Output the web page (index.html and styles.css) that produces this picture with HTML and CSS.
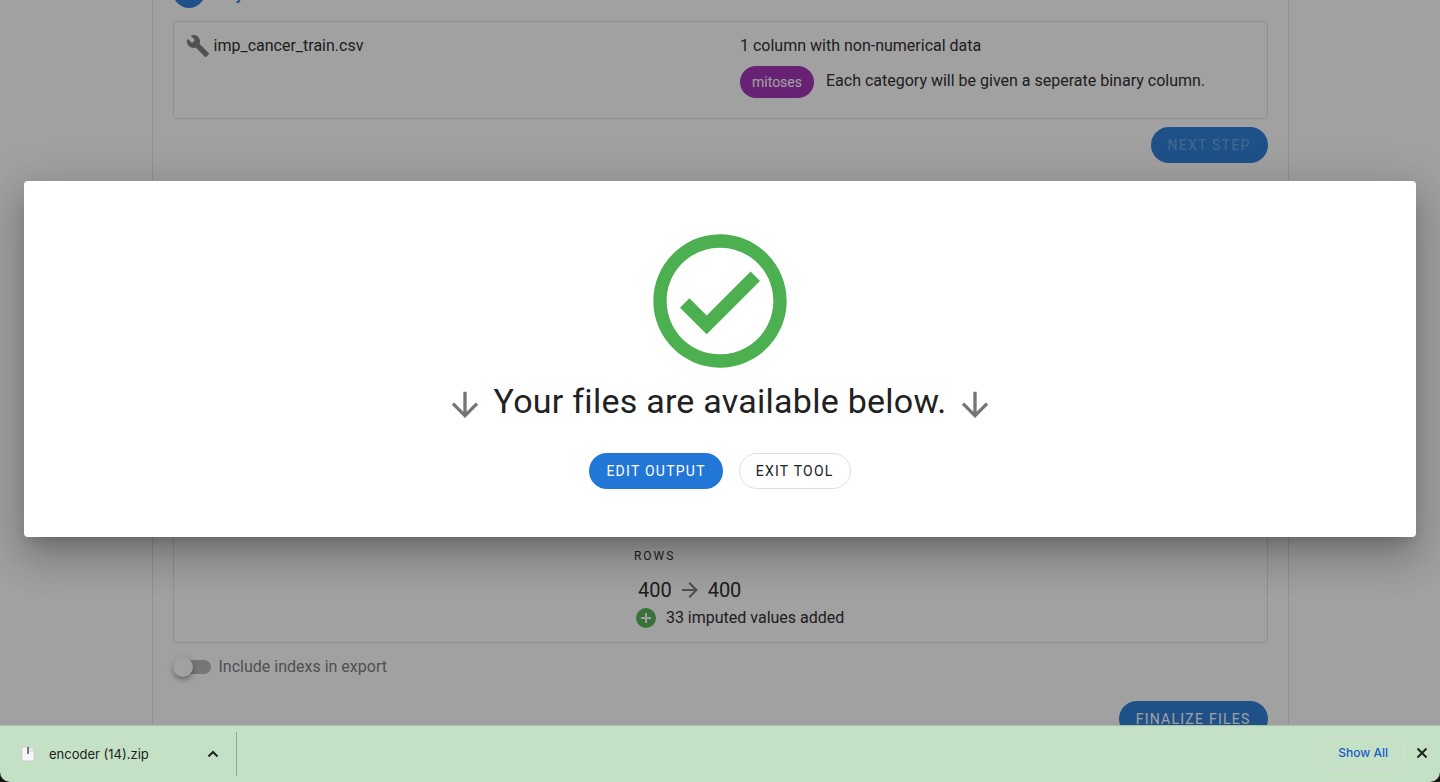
FILE: index.html
```html
<!DOCTYPE html>
<html lang="en">
<head>
<meta charset="utf-8">
<title>Encoder</title>
<link rel="stylesheet" href="styles.css">
</head>
<body>
<div class="viewport">
  <main class="stepper">
    <header class="step-head">
      <span class="step-num">2</span>
      <h2 class="step-title">Adjust for non-numerical columns</h2>
    </header>
    <section class="card columns-card">
      <div class="file">
        <svg class="icon" viewBox="0 0 24 24" width="24" height="24"><path d="M22.7 19l-9.1-9.1c.9-2.3.4-5-1.5-6.9-2-2-5-2.4-7.4-1.3L9 6 6 9 1.6 4.7C.4 7.1.9 10.1 2.9 12.1c1.9 1.9 4.6 2.4 6.9 1.5l9.1 9.1c.4.4 1 .4 1.4 0l2.3-2.3c.5-.4.5-1.1.1-1.4z"/></svg>
        <span>imp_cancer_train.csv</span>
      </div>
      <div class="summary">
        <p class="line">1 column with non-numerical data</p>
        <div class="category"><span class="chip">mitoses</span><p class="line">Each category will be given a seperate binary column.</p></div>
      </div>
    </section>
    <div class="actions"><button class="btn primary" disabled>Next step</button></div>
    <section class="card result-card">
      <div class="rows">
        <h3 class="overline">Rows</h3>
        <div class="counts"><span>400</span>
          <svg class="icon" viewBox="0 0 24 24" width="24" height="24"><path d="M4 11v2h12l-5.500 5.500 1.420 1.420L19.840 12l-7.920-7.920L10.500 5.500 16 11H4z"/></svg>
          <span>400</span></div>
        <div class="imputed">
          <svg class="plus" viewBox="0 0 24 24" width="24" height="24"><circle cx="12" cy="12" r="9" fill="#fff"/><path d="M17 13h-4v4h-2v-4H7v-2h4V7h2v4h4m-5-9A10 10 0 0 0 2 12a10 10 0 0 0 10 10 10 10 0 0 0 10-10A10 10 0 0 0 12 2z"/></svg>
          <span>33 imputed values added</span></div>
      </div>
    </section>
    <label class="switch"><input type="checkbox" role="switch"><span>Include indexs in export</span></label>
    <div class="actions"><button class="btn primary">Finalize files</button></div>
  </main>
  <div class="overlay">
    <div class="dialog" role="dialog" aria-modal="true" aria-labelledby="dialog-title">
      <svg class="check" viewBox="0 0 24 24" width="160" height="160"><path d="M12 2C6.500 2 2 6.500 2 12s4.500 10 10 10 10-4.500 10-10S17.500 2 12 2m0 18c-4.420 0-8-3.580-8-8s3.580-8 8-8 8 3.580 8 8-3.580 8-8 8m4.590-12.420L10 14.170l-2.590-2.580L6 13l4 4 8-8z"/></svg>
      <div class="dialog-head">
        <svg class="icon" viewBox="0 0 24 24" width="40" height="40"><path d="M11 4h2v12l5.500-5.500 1.420 1.420L12 19.840l-7.920-7.920L5.500 10.500 11 16V4z"/></svg>
        <h1 id="dialog-title">Your files are available below.</h1>
        <svg class="icon" viewBox="0 0 24 24" width="40" height="40"><path d="M11 4h2v12l5.500-5.500 1.420 1.420L12 19.840l-7.920-7.920L5.500 10.500 11 16V4z"/></svg>
      </div>
      <div class="dialog-actions">
        <button class="btn primary">Edit output</button>
        <button class="btn outlined">Exit tool</button>
      </div>
    </div>
  </div>
</div>
<footer class="shelf-frame">
  <div class="shelf">
    <div class="download">
      <svg class="zip" viewBox="0 0 14 16" width="14" height="16"><path d="M1 1h8l4 4v10H1z" fill="#f7f5f7" stroke="#b5b9b5" stroke-width=".5"/><path d="M9 1v4h4" fill="#fff" stroke="#aaa" stroke-width=".6"/><path d="M6 1h2v7H6z" fill="#777"/></svg>
      <span>encoder (14).zip</span>
      <button class="icon-btn" aria-label="Download options"><svg viewBox="0 0 12 12" width="12" height="12"><path d="M1.500 8.500L6 4l4.500 4.500"/></svg></button>
    </div>
    <div class="shelf-actions">
      <button class="show-all">Show All</button>
      <button class="icon-btn" aria-label="Close"><svg viewBox="0 0 12 12" width="12" height="12"><path d="M1.500 1.500l9 9m0-9l-9 9"/></svg></button>
    </div>
  </div>
</footer>
</body>
</html>
```
FILE: styles.css
```css
* { box-sizing: border-box; }
body { margin: 0; height: 100vh; display: flex; flex-direction: column; overflow: hidden; font: 16px/24px Roboto, sans-serif; color: #212121; background: #fff; }
h1, h2, h3, p { margin: 0; font-weight: 400; }
button { font: inherit; cursor: pointer; }
svg { display: block; flex: none; }
.icon { fill: #757575; }

.viewport { position: relative; flex: 1; min-height: 0; overflow: hidden; }
.stepper { max-width: 1137px; margin: -24px auto 0; padding: 0 20px 32px; border: 1px solid #e0e0e0; border-width: 0 1px; }
.step-head { display: flex; align-items: center; gap: 8px; height: 32px; margin-bottom: 13px; }
.step-num { width: 32px; height: 32px; border-radius: 50%; background: #2276d6; color: #fff; text-align: center; line-height: 32px; }
.step-title { font-size: 20px; color: #2276d6; }
.card { border: 1px solid #e0e0e0; border-radius: 4px; padding: 12px; }
.columns-card { display: grid; grid-template-columns: 1fr 1fr; gap: 40px; min-height: 98px; }
.file { display: flex; gap: 4px; align-items: flex-start; }
.category { display: flex; gap: 12px; margin-top: 8px; }
.category .line { padding-top: 3px; }
.chip { height: 32px; padding: 0 12px; border-radius: 16px; background: #9c27b0; color: #fff; font-size: 14px; line-height: 32px; }
.actions { display: flex; justify-content: flex-end; margin-top: 8px; }
.btn { height: 36px; padding: 0 16px; border: 1px solid transparent; border-radius: 18px; font-size: 14px; letter-spacing: 1.25px; text-transform: uppercase; }
.primary { background: #2276d6; color: #fff; }
.primary:disabled { color: rgba(255, 255, 255, .3); }
.outlined { background: #fff; border-color: #e0e0e0; color: #212121; }
.result-card { display: grid; grid-template-columns: 5fr 7fr; align-items: end; min-height: 440px; margin-top: 40px; }
.rows { grid-column: 2; padding-left: 3px; }
.overline { font-size: 12px; line-height: 20px; letter-spacing: 2px; text-transform: uppercase; }
.counts { display: flex; align-items: center; gap: 6px; padding-left: 4px; margin-top: 8px; font-size: 20px; line-height: 32px; }
.imputed { display: flex; gap: 8px; }
.plus { fill: #4caf50; }
.switch { display: flex; align-items: center; gap: 8px; margin-top: 12px; color: #757575; }
.switch input { appearance: none; position: relative; width: 36px; height: 14px; margin: 0 0 0 2px; border-radius: 7px; background: #b5b5b5; }
.switch input::before { content: ""; position: absolute; left: -2px; top: -3px; width: 20px; height: 20px; border-radius: 50%; background: #fff; box-shadow: 0 2px 4px -1px rgba(0, 0, 0, .3), 0 4px 5px rgba(0, 0, 0, .14), 0 1px 10px rgba(0, 0, 0, .12); }
.switch + .actions { margin-top: 22px; }

.overlay { position: absolute; inset: 0; display: flex; align-items: center; padding: 0 24px 7px; background: rgba(29, 29, 29, .415); }
.dialog { flex: 1; display: flex; flex-direction: column; align-items: center; padding: 40px 24px 48px; border-radius: 4px; background: #fff; box-shadow: 0 11px 15px -7px rgba(0, 0, 0, .2), 0 24px 38px 3px rgba(0, 0, 0, .14), 0 9px 46px 8px rgba(0, 0, 0, .12); }
.check { fill: #4caf50; }
.dialog-head { display: flex; align-items: center; gap: 9px; height: 40px; }
.dialog-head .icon { margin-top: 8px; }
h1 { font-size: 34px; line-height: 40px; letter-spacing: .25px; }
.dialog-actions { display: flex; gap: 16px; margin-top: 32px; }

.shelf-frame { background: #151515; }
.shelf { display: flex; align-items: center; height: 57px; border-top: 1px solid #a9c3a9; border-radius: 0 0 10px 10px; background: #c5e1c5; font: 13px/20px Inter, sans-serif; }
.download { display: flex; align-items: center; width: 237px; height: 44px; padding: 0 17px 0 21px; border-right: 1px solid #91a891; }
.download span { margin: 0 auto 0 14px; }
.icon-btn { display: flex; padding: 0; border: 0; background: none; }
.icon-btn path { fill: none; stroke: #202420; stroke-width: 2; }
.shelf-actions { display: flex; align-items: center; gap: 12px; margin: 0 0 2px auto; padding-right: 12px; }
.show-all { height: 32px; padding: 0 15px; border: 1px solid #d6dad9; border-radius: 4px; background: none; color: #1a5cc8; font-size: 12px; font-weight: 500; }
```
